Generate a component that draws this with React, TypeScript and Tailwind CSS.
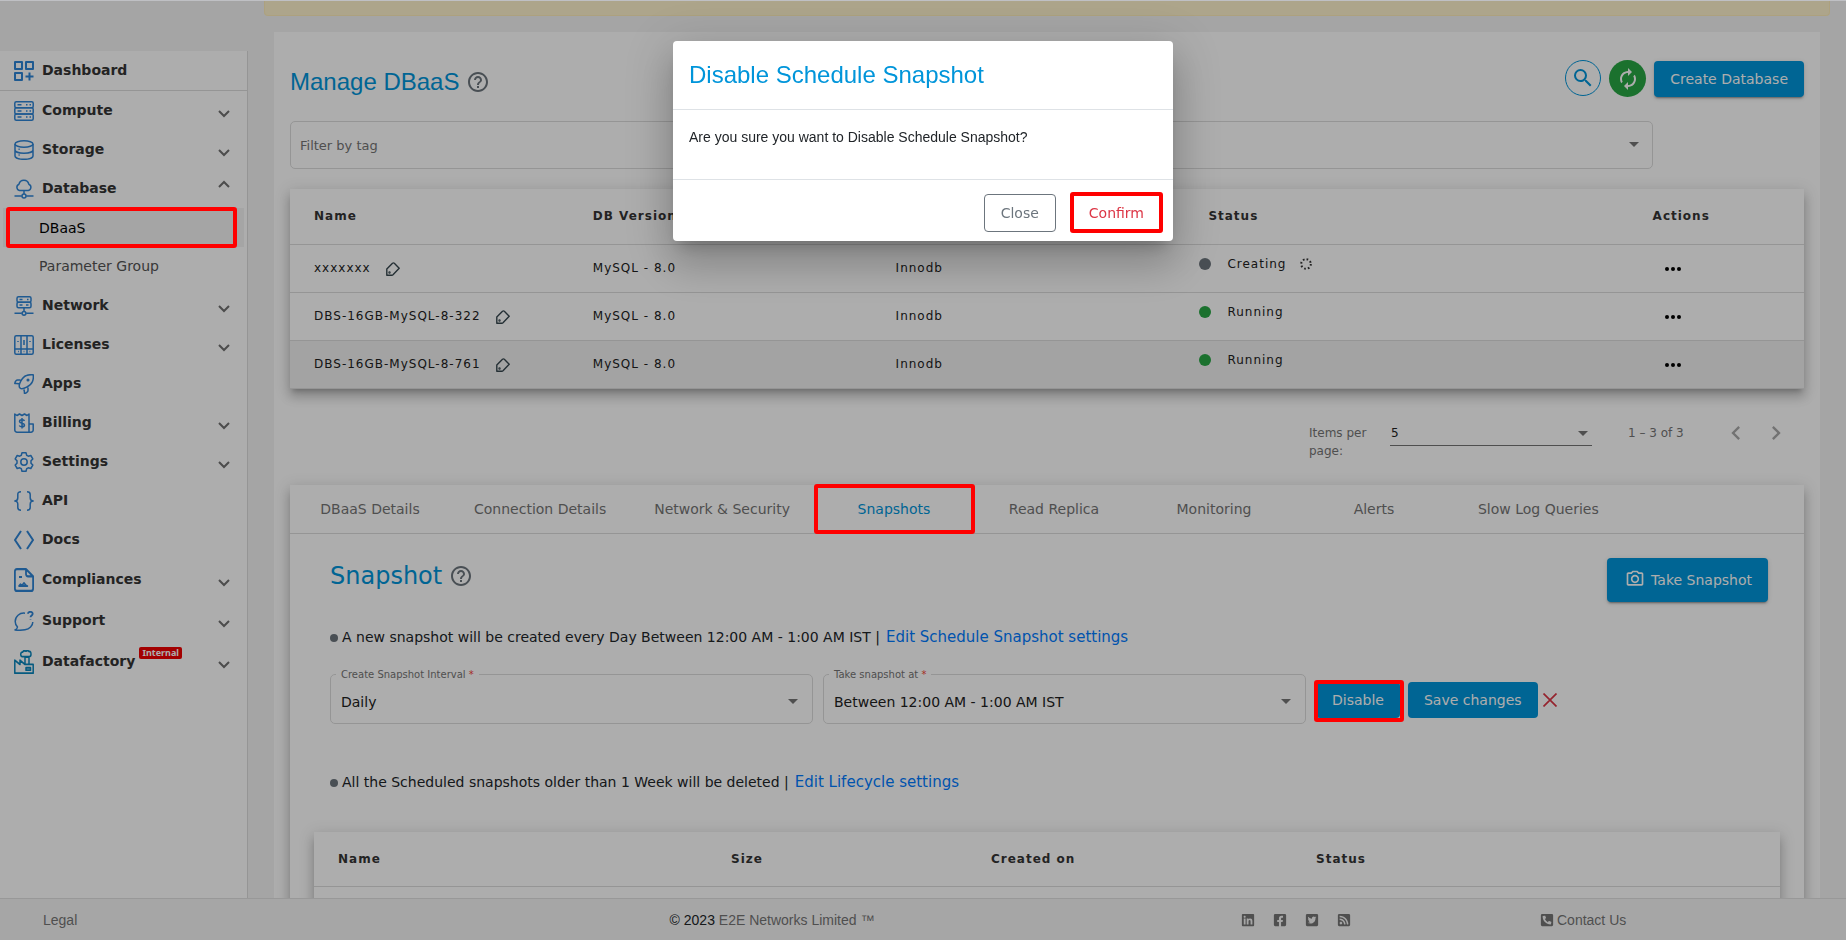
import type { ReactNode } from "react";
import { MdAutorenew, MdChevronLeft, MdChevronRight, MdHelpOutline, MdOutlinePhotoCamera, MdSearch } from "react-icons/md";
import { FaFacebookSquare, FaLinkedin, FaPhoneSquareAlt, FaRssSquare, FaTwitterSquare } from "react-icons/fa";
import clsx from "clsx";

const sans = "font-['DejaVu_Sans',sans-serif]";
const arial = "font-['Liberation_Sans',Arial,sans-serif]";

const icons: Record<string, ReactNode> = {
  dashboard: (
    <g strokeWidth="2">
      <rect x="1" y="1" width="7" height="7" />
      <rect x="12" y="1" width="7" height="7" />
      <rect x="1" y="12" width="7" height="7" />
      <path d="M15.5 11.5v8M11.5 15.5h8" />
    </g>
  ),
  compute: (
    <>
      <rect x=".8" y=".8" width="18.4" height="6" rx="1.5" />
      <rect x=".8" y="6.8" width="18.4" height="6.2" rx="1.5" />
      <rect x=".8" y="13" width="18.4" height="6.2" rx="1.5" />
      <path d="M3.5 3.8h4M12 3.8h1.5M15.5 3.8H17M3.5 9.9h4M12 9.9h1.5M15.5 9.9H17M3.5 16.1h4M12 16.1h1.5M15.5 16.1H17" />
    </>
  ),
  storage: (
    <>
      <ellipse cx="10" cy="4" rx="9" ry="3.2" />
      <path d="M1 4v12c0 1.9 4 3.3 9 3.3s9-1.4 9-3.3V4M1 10c0 1.8 4 3.2 9 3.2s9-1.4 9-3.2M4.5 9.3h1.2M4.500 15h1.2" />
    </>
  ),
  database: (
    <>
      <path d="M5.5 11.5A3.3 3.3 0 0 1 5 5.2 5 5 0 0 1 14.8 5.2a3.3 3.3 0 0 1-.5 6.3zM10 11.5V15M.5 17h7.3M12.2 17h7.3" />
      <circle cx="10" cy="17" r="2" />
    </>
  ),
  network: (
    <>
      <rect x="3" y=".8" width="14" height="5.5" rx="1.5" />
      <rect x="3" y="6.3" width="14" height="5.5" rx="1.5" />
      <path d="M5.5 3.5h3M13 3.5h1.5M5.5 9h3M12 9h2.5M10 12v3M.5 17.3h7.3M12.2 17.3h7.3" />
      <circle cx="10" cy="17.3" r="1.9" />
    </>
  ),
  licenses: (
    <>
      <rect x=".8" y=".8" width="18.4" height="18.4" rx="1.5" />
      <path d="M7 1v18M13 1v18M1 14h18M10 5v5M4 6v1M16 6v1M4 16.5h.8M9.6 16.5h.8M15.5 16.5h.8" />
    </>
  ),
  apps: (
    <>
      <path d="M6 14C3.5 11.5 8 3 12.5 1.5 15 .6 17.5.6 19.2.8c.3 2 .2 4.5-.7 6.7C17 11.5 8.5 16.5 6 14zM6.5 6h-3C2.500 6 1 7.5.8 9.500c1 0 2.500-.3 4 .3M14 13.500v3c0 1-1.500 2.700-3.500 3-.2-1.300.2-2.700-.8-4" />
      <circle cx="14" cy="6" r=".8" />
    </>
  ),
  billing: (
    <>
      <path d="M15 19.2H3A2.200 2.200 0 0 1 .8 17V1L3 2.500 5.500 1 8 2.500 10.500 1 13 2.500 15 1v18.200h2a2.200 2.200 0 0 0 2.200-2.200v-6H15" />
      <path d="M10.500 7.800C10 7 9.200 6.700 8 6.700c-1.500 0-2.500.7-2.500 1.700 0 2.400 5 1.200 5 3.600 0 1.100-1 1.800-2.500 1.800-1.300 0-2.200-.4-2.700-1.300M8 5v10.500" />
    </>
  ),
  settings: (
    <>
      <path d="M8 .8h4l.7 2.5 1.6.9 2.5-.7 2 3.4L17 8.800v2.400l1.800 1.900-2 3.400-2.500-.7-1.600.9-.7 2.500H8l-.7-2.500-1.600-.9-2.500.7-2-3.400L3 11.200V8.800L1.200 6.900l2-3.400 2.500.7 1.600-.9z" />
      <circle cx="10" cy="10" r="3.2" />
    </>
  ),
  api: (
    <path d="M7 .8C4.500.8 3.800 1.800 3.800 3.500v3.300C3.800 8.500 3 10 .8 10c2.200 0 3 1.500 3 3.200v3.300c0 1.700.7 2.700 3.200 2.700M13 .8c2.500 0 3.200 1 3.200 2.700v3.300c0 1.700.8 3.200 3 3.200-2.200 0-3 1.500-3 3.200v3.300c0 1.700-.7 2.700-3.200 2.700" />
  ),
  docs: <path d="M7 1 1 10l6 9M13 1l6 9-6 9" strokeWidth="2" />,
  compliances: (
    <>
      <path d="M12 .9H3A2.100 2.100 0 0 0 .9 3v14A2.100 2.100 0 0 0 3 19.100h14a2.100 2.100 0 0 0 2.100-2.100V7zM12 .9V5a2 2 0 0 0 2 2h5" strokeWidth="1.8" />
      <path d="M5 7.500h3M5 15l1.500-1.500L8 14.500l2-2 2 2 1.500.5z" />
    </>
  ),
  support: (
    <>
      <path d="M11 2.200C5.500 1.500 1.200 5.500 1.200 10.500c0 2.500 1.300 4.500 2.300 5.500-.2 1.300-1 2.300-2.500 3 5 .5 7.500.3 10-.2 4.500-.8 7.800-4 7.800-7.800" />
      <path d="M14 2.800C14 1.500 15 .8 16.300.8s2.400.8 2.400 2c0 1.600-2.200 1.800-2.200 3.500M16.500 8.500v.6" strokeWidth="1.8" />
    </>
  ),
  datafactory: (
    <>
      <path d="M.8 19.300V8.500L6 12V8.500l5 3.500h8.200v7.300zM11 11.500V6h4v6M8 5.500C6 5 6.500 1.500 8.500 1.800 9.300.6 11 .5 12 1c1-.7 2.500-.5 3 .3 1.500-.3 2 .7 2 2.200 0 1.500-1 2-2 2z" />
      <rect x="12" y="14.800" width="4.500" height="2" />
    </>
  ),
};

interface NavItem {
  key: string;
  label: string;
  tall?: boolean;
  chevron?: "up" | "down";
}

const navItems: NavItem[] = [
  { key: "dashboard", label: "Dashboard" },
  { key: "compute", label: "Compute", chevron: "down" },
  { key: "storage", label: "Storage", chevron: "down" },
  { key: "database", label: "Database", chevron: "up" },
  { key: "network", label: "Network", chevron: "down" },
  { key: "licenses", label: "Licenses", chevron: "down" },
  { key: "apps", label: "Apps" },
  { key: "billing", label: "Billing", chevron: "down" },
  { key: "settings", label: "Settings", chevron: "down" },
  { key: "api", label: "API" },
  { key: "docs", label: "Docs" },
  { key: "compliances", label: "Compliances", chevron: "down", tall: true },
  { key: "support", label: "Support", chevron: "down", tall: true },
  { key: "datafactory", label: "Datafactory", chevron: "down", tall: true },
];

const databases = [
  { name: "xxxxxxx", status: "Creating" },
  { name: "DBS-16GB-MySQL-8-322", status: "Running" },
  { name: "DBS-16GB-MySQL-8-761", status: "Running" },
];

const tabs = [
  "DBaaS Details",
  "Connection Details",
  "Network & Security",
  "Snapshots",
  "Read Replica",
  "Monitoring",
  "Alerts",
  "Slow Log Queries",
];

const cardShadow =
  "shadow-[0_5px_5px_-3px_rgba(0,0,0,0.2),0_8px_10px_1px_rgba(0,0,0,0.14),0_3px_14px_2px_rgba(0,0,0,0.12)]";
const buttonShadow = "shadow-[0_3px_1px_-2px_rgba(0,0,0,0.2),0_2px_2px_0_rgba(0,0,0,0.14),0_1px_5px_0_rgba(0,0,0,0.12)]";

export default function App() {
  return (
    <div className={clsx("h-screen flex flex-col overflow-hidden bg-[#bfc0c4] pt-px text-sm text-[#212529]", sans)}>
      <div className="flex-1 min-h-0 flex bg-[#f4f4f4]">
        <Sidebar />
        <main className="flex-1 min-w-0 overflow-hidden px-4">
          <div className="h-[15px] rounded-b bg-[#fff3cd] border border-t-0 border-[#ffeeba]" />
          <div className="mt-4 mx-[10px] bg-white px-4 pt-7 pb-10">
            <ManageHeader />
            <TagFilter />
            <DatabaseTable />
            <Paginator />
            <DetailsCard />
          </div>
        </main>
      </div>
      <Footer />
      <div className="fixed inset-x-0 top-px bottom-0 z-40 bg-black/32" />
      <ConfirmDialog />
    </div>
  );
}

function Mark({ className }: { className: string }) {
  return <span className={clsx("absolute z-50 pointer-events-none border-4 border-[#ff0000] rounded-[3px]", className)} />;
}

function Arrow({ className }: { className?: string }) {
  return (
    <svg viewBox="0 0 10 5" className={clsx("w-[10px] h-[5px] fill-[#757575] pointer-events-none", className)}>
      <path d="M0 0h10L5 5z" />
    </svg>
  );
}

function Sidebar() {
  return (
    <nav className="w-62 shrink-0 mt-[50px] bg-white border-r border-[#dcdcdc]">
      <ul>
        {navItems.map((item) => (
          <li key={item.key} className={clsx(item.key === "dashboard" && "border-b border-[#dcdcdc]")}>
            <a href="#" className={clsx("flex items-center pl-[14px] pr-[17px] pb-[2px]", item.tall ? "h-[41px]" : "h-[39px]")}>
              <svg
                viewBox="0 0 20 20"
                className={clsx(
                  "w-5 mt-[2px] fill-none",
                  item.key === "datafactory" ? "stroke-[#0a86bd]" : "stroke-[#2f85d6]",
                  item.key === "compliances" || item.key === "datafactory" ? "h-6" : "h-5"
                )}
                preserveAspectRatio="none"
                strokeWidth="1.5"
                strokeLinejoin="round"
              >
                {icons[item.key]}
              </svg>
              <span className="ml-2 font-bold text-[#343434]">{item.label}</span>
              {item.key === "datafactory" && (
                <span className="ml-1 mb-4 h-3 px-[3px] rounded-[2px] bg-[#f00000] text-white text-[9px] leading-3 font-bold font-['Noto_Sans',sans-serif]">
                  Internal
                </span>
              )}
              {item.chevron && (
                <svg
                  viewBox="0 0 12 8"
                  className={clsx(
                    "w-3 h-2 ml-auto fill-none stroke-[#707070]",
                    item.chevron === "up" ? "rotate-180 mb-[7px]" : "mt-2"
                  )}
                  strokeWidth="2"
                >
                  <path d="M1 1l5 5 5-5" />
                </svg>
              )}
            </a>
            {item.key === "database" && (
              <ul>
                <li className="relative mx-[3px] bg-[#f4f4f4]">
                  <a href="#" className="flex items-center h-[39px] pl-9 text-black">DBaaS</a>
                  <Mark className="left-[3px] right-[7px] -inset-y-px" />
                </li>
                <li className="mx-[3px]">
                  <a href="#" className="flex items-center h-[39px] pb-[2px] pl-9 text-[#555]">Parameter Group</a>
                </li>
              </ul>
            )}
          </li>
        ))}
      </ul>
    </nav>
  );
}

function ManageHeader() {
  return (
    <div className="flex items-start h-[37px]">
      <h1 className={clsx("flex items-center h-11 text-2xl text-[#0095da]", arial)}>
        Manage DBaaS
        <MdHelpOutline size={24} className="ml-[7px] text-[#6c757d]" />
      </h1>
      <button
        aria-label="Search"
        className="ml-auto w-9 h-9 rounded-full border border-[#0095da] flex items-center justify-center text-[#0095da]"
      >
        <MdSearch size={24} />
      </button>
      <button
        aria-label="Refresh"
        className="ml-2 w-[37px] h-[37px] rounded-full bg-[#28a745] flex items-center justify-center text-white"
      >
        <MdAutorenew size={24} />
      </button>
      <button className={clsx("ml-2 mt-px h-9 px-4 rounded bg-[#0095da] text-white", buttonShadow)}>Create Database</button>
    </div>
  );
}

function TagFilter() {
  return (
    <div className="relative mt-6 w-9/10">
      <select
        aria-label="Filter by tag"
        className="block w-full h-12 appearance-none rounded-[5px] border border-[#dcdcdc] px-[9px] pt-[2px] text-[13px] text-[#757575]"
      >
        <option>Filter by tag</option>
      </select>
      <Arrow className="absolute right-[14px] top-[21px]" />
    </div>
  );
}

function DatabaseTable() {
  return (
    <table className={clsx("mt-5 w-full table-fixed bg-white text-xs tracking-[1px] text-left text-[#212121]", cardShadow)}>
      <thead>
        <tr className="h-[55px] border-b border-[#dcdcdc] text-[#343434]">
          <th className="pl-6">Name</th>
          <th>DB Version</th>
          <th>Engine</th>
          <th className="pl-[10px]">Status</th>
          <th>
            <div className="pl-[50%]">Actions</div>
          </th>
        </tr>
      </thead>
      <tbody>
        {databases.map((db, i) => (
          <tr key={db.name} className={clsx("h-12 border-b border-[#dcdcdc]", i === 2 && "bg-[#f0f0f0]")}>
            <td className="pl-6">
              <div className="flex items-center">
                {db.name}
                <svg viewBox="0 0 14 14" className="w-[14px] h-[14px] ml-[15px] mt-[2px] fill-none stroke-[#37474f]" strokeWidth="1.4" strokeLinejoin="round">
                  <path d="M.8 13.200V7L6.500 1.200Q7.500.5 8.300 1.200L13.200 6.200 7 12.800Q6.600 13.200 6 13.200z" />
                  <circle cx="3.500" cy="10.500" r=".5" />
                </svg>
              </div>
            </td>
            <td>MySQL - 8.0</td>
            <td>Innodb</td>
            <td>
              <div className="flex items-center mb-2 pl-px">
                <span
                  className={clsx("w-3 h-3 rounded-full", db.status === "Running" ? "bg-[#28a745]" : "bg-[#6c757d]")}
                />
                <span className="ml-4">{db.status}</span>
                {db.status === "Creating" && (
                  <svg viewBox="0 0 12 12" className="w-3 h-3 ml-[14px] fill-none stroke-[#333]" strokeWidth="2">
                    <circle cx="6" cy="6" r="4.800" strokeDasharray="1.700 2.070" />
                  </svg>
                )}
              </div>
            </td>
            <td>
              <div className="pl-[50%]">
                <button aria-label="Actions" className="block ml-3 mt-[2px]">
                  <svg viewBox="0 0 16 4" className="w-4 h-1 fill-black">
                    <circle cx="2" cy="2" r="2" />
                    <circle cx="8" cy="2" r="2" />
                    <circle cx="14" cy="2" r="2" />
                  </svg>
                </button>
              </div>
            </td>
          </tr>
        ))}
      </tbody>
    </table>
  );
}

function Paginator() {
  return (
    <div className="h-24 pt-[35px] flex items-start justify-end text-xs leading-[18px] text-[#757575]">
      <label htmlFor="page-size" className="w-[81px]">Items per page:</label>
      <div className="relative w-[202px]">
        <select id="page-size" className="block w-full h-[22px] pb-1 appearance-none border-b border-[#757575] pl-px text-[#212121]">
          <option>5</option>
        </select>
        <Arrow className="absolute right-1 top-[7px]" />
      </div>
      <span className="ml-9 w-[94px]">1 – 3 of 3</span>
      <button aria-label="Previous page" className="-mt-[5px] mr-3">
        <MdChevronLeft size={28} className="text-[#a9a9a9]" />
      </button>
      <button aria-label="Next page" className="-mt-[5px] mr-[14px]">
        <MdChevronRight size={28} className="text-[#a9a9a9]" />
      </button>
    </div>
  );
}

function DetailsCard() {
  return (
    <section className={clsx("bg-white pb-10", cardShadow)}>
      <div className="flex border-b border-[#dcdcdc]">
        {tabs.map((tab) => (
          <button
            key={tab}
            className={clsx("relative h-12 min-w-40 px-6", tab === "Snapshots" ? "text-[#0095da]" : "text-[#757575]")}
          >
            {tab}
            {tab === "Snapshots" && <Mark className="left-0 -right-px -inset-y-px" />}
          </button>
        ))}
      </div>

      <div className="px-6 pt-6">
        <div className="pl-4">
          <div className="flex items-start justify-between pr-3">
            <h2 className="flex items-center h-9 text-2xl text-[#0095da]">
              Snapshot
              <MdHelpOutline size={24} className="ml-[7px] text-[#6c757d]" />
            </h2>
            <button className={clsx("flex items-center h-11 px-4 rounded bg-[#0095da] text-white", buttonShadow)}>
              <MdOutlinePhotoCamera size={20} className="ml-[2px] mr-[6px] mb-[2px]" />
              Take Snapshot
            </button>
          </div>

          <BulletLine
            className="mt-[25px]"
            text="A new snapshot will be created every Day Between 12:00 AM - 1:00 AM IST |"
            link="Edit Schedule Snapshot settings"
          />

          <div className="mt-[21px] flex items-center">
            <SelectField id="interval" label="Create Snapshot Interval" value="Daily" />
            <SelectField id="snapshot-time" label="Take snapshot at" value="Between 12:00 AM - 1:00 AM IST" />
            <button className="relative mt-2 h-9 px-4 rounded bg-[#0095da] text-white">
              Disable
              <Mark className="-left-[2px] -right-1 -top-[2px] -bottom-1" />
            </button>
            <button className="ml-2 mt-2 h-9 px-4 rounded bg-[#0095da] text-white">Save changes</button>
            <button aria-label="Cancel" className="ml-[5px] mt-2">
              <svg viewBox="0 0 14 14" className="w-[14px] h-[14px] stroke-[#dc3545]" strokeWidth="1.7">
                <path d="M.5.5l13 13M13.500.5l-13 13" />
              </svg>
            </button>
          </div>

          <BulletLine
            className="mt-12"
            text="All the Scheduled snapshots older than 1 Week will be deleted |"
            link="Edit Lifecycle settings"
          />
        </div>

        <table className={clsx("mt-10 w-full table-fixed bg-white text-xs tracking-[1px] text-left", cardShadow)}>
          <thead>
            <tr className="h-[55px] border-b border-[#dcdcdc] text-[#343434]">
              <th className="w-[417px] pl-6">Name</th>
              <th className="w-[260px]">Size</th>
              <th className="w-[325px]">Created on</th>
              <th>Status</th>
            </tr>
          </thead>
          <tbody>
            <tr className="h-12 border-b border-[#dcdcdc]">
              <td colSpan={4} />
            </tr>
          </tbody>
        </table>
      </div>
    </section>
  );
}

function BulletLine({ text, link, className }: { text: string; link: string; className: string }) {
  return (
    <p className={clsx("flex items-center h-5", className)}>
      <span className="w-2 h-2 mt-[2px] mr-1 rounded-full bg-[#6c757d]" />
      {text}
      <a href="#" className="ml-[6px] mt-[2px] text-[15px] text-[#007bff]">{link}</a>
    </p>
  );
}

function SelectField({ id, label, value }: { id: string; label: string; value: string }) {
  return (
    <div className="w-[34%] pr-[10px]">
      <fieldset className="relative rounded-[5px] border border-[#dcdcdc] px-[5px]">
        <legend className="px-[5px] text-[10px] leading-[14px] text-[#757575]">
          <label htmlFor={id}>
            {label} <span className="text-[#f44336]">*</span>
          </label>
        </legend>
        <select id={id} className="block w-full h-[41px] appearance-none pl-[5px] text-[#212121]">
          <option>{value}</option>
        </select>
        <Arrow className="absolute right-[14px] top-[17px]" />
      </fieldset>
    </div>
  );
}

function Footer() {
  return (
    <footer
      className={clsx(
        "shrink-0 h-[42px] grid grid-cols-[480fr_584fr_464fr_318fr] items-center bg-[#f5f5f5] border-t border-[#e0e0e0] text-[#757575]",
        arial
      )}
    >
      <a href="#" className="pl-[43px]">Legal</a>
      <p className="text-center">
        <span className="text-[#212529]">© 2023</span> E2E Networks Limited ™
      </p>
      <div className="flex justify-center gap-[18px]">
        <a href="#" aria-label="LinkedIn"><FaLinkedin size={14} /></a>
        <a href="#" aria-label="Facebook"><FaFacebookSquare size={14} /></a>
        <a href="#" aria-label="Twitter"><FaTwitterSquare size={14} /></a>
        <a href="#" aria-label="RSS"><FaRssSquare size={14} /></a>
      </div>
      <a href="#" className="flex items-center gap-[3px] pl-3">
        <FaPhoneSquareAlt size={14} />
        Contact Us
      </a>
    </footer>
  );
}

function ConfirmDialog() {
  return (
    <div className="fixed inset-x-0 top-[41px] z-50 flex justify-center">
      <div
        role="dialog"
        aria-labelledby="dialog-title"
        className="w-[500px] rounded bg-white shadow-[0_11px_15px_-7px_rgba(0,0,0,0.2),0_24px_38px_3px_rgba(0,0,0,0.14),0_9px_46px_8px_rgba(0,0,0,0.12)]"
      >
        <h2 id="dialog-title" className={clsx("h-[69px] px-4 flex items-center border-b border-[#dee2e6] text-2xl text-[#0095da]", arial)}>
          Disable Schedule Snapshot
        </h2>
        <p className={clsx("h-[70px] px-4 pt-[17px] border-b border-[#dee2e6]", arial)}>
          Are you sure you want to Disable Schedule Snapshot?
        </p>
        <div className="flex justify-end gap-4 pt-[14px] pb-[9px] pr-3">
          <button className="h-[38px] px-4 rounded border border-[#6c757d] text-[#6c757d]">Close</button>
          <button className="relative h-[38px] px-[17px] text-[#dc3545]">
            Confirm
            <Mark className="-inset-x-[2px] -top-[2px] -bottom-px" />
          </button>
        </div>
      </div>
    </div>
  );
}
